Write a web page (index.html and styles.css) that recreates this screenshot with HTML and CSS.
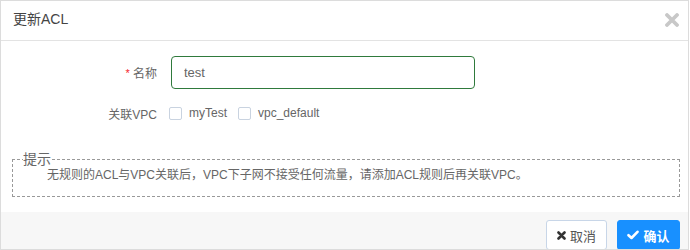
FILE: index.html
```html
<!DOCTYPE html>
<html lang="zh-CN">
<head>
<meta charset="utf-8">
<title>更新ACL</title>
<link rel="stylesheet" href="styles.css">
</head>
<body>
<div class="dialog">
  <div class="header">
    <span class="title">更新ACL</span>
    <svg class="close" width="14" height="14" viewBox="0 0 14 14"><path d="M2 2 L12 12 M12 2 L2 12" stroke="#c8c8c8" stroke-width="3.8" stroke-linecap="round"/></svg>
  </div>
  <div class="content">
    <div class="row">
      <label class="label"><span class="req">*</span> 名称</label>
      <input class="input" type="text" value="test">
    </div>
    <div class="row row2">
      <span class="label">关联VPC</span>
      <span class="opts">
        <span class="opt"><span class="cb"></span>myTest</span>
        <span class="opt"><span class="cb"></span>vpc_default</span>
      </span>
    </div>
    <fieldset class="tip">
      <legend>提示</legend>
      <p class="tip-text">无规则的ACL与VPC关联后，VPC下子网不接受任何流量，请添加ACL规则后再关联VPC。</p>
    </fieldset>
  </div>
  <div class="footer">
    <button class="btn btn-cancel"><svg width="9" height="9" viewBox="0 0 9 9"><path d="M1.5 1.5 L7.5 7.5 M7.5 1.5 L1.5 7.5" stroke="#333" stroke-width="2.6" stroke-linecap="round"/></svg>取消</button>
    <button class="btn btn-ok"><svg width="12" height="10" viewBox="0 0 12 10"><path d="M1.5 5.2 L4.5 8 L10.5 1.8" fill="none" stroke="#fff" stroke-width="2.6" stroke-linecap="round" stroke-linejoin="round"/></svg>确认</button>
  </div>
</div>
</body>
</html>
```
FILE: styles.css
```css
html, body {
  margin: 0;
  padding: 0;
  background: #fff;
}
body {
  font-family: "Liberation Sans", "Noto Sans CJK SC", sans-serif;
  color: #666;
}
.dialog {
  width: 689px;
  height: 250px;
  box-sizing: border-box;
  border: 1px solid #dcdcdc;
  overflow: hidden;
  display: flex;
  flex-direction: column;
  background: #fff;
}
.header {
  height: 39px;
  border-bottom: 1px solid #e3e3e3;
  display: flex;
  align-items: center;
  justify-content: space-between;
  padding: 0 9px 0 12px;
  flex: none;
}
.title {
  font-size: 14px;
  color: #444;
  line-height: 16px;
  margin-top: -3px;
}
.close {
  display: block;
  margin-top: -1px;
}
.content {
  padding-top: 15px;
  flex: none;
}
.row {
  display: flex;
  align-items: center;
}
.label {
  width: 156px;
  text-align: right;
  font-size: 12px;
  color: #666;
  margin-right: 14px;
  flex: none;
}
.req {
  color: #f5222d;
  font-size: 11px;
  position: relative;
  top: -1px;
}
.input {
  width: 304px;
  height: 33px;
  box-sizing: border-box;
  border: 1px solid #2f7a3c;
  border-radius: 4px;
  padding: 0 12px;
  font-family: "Liberation Sans", "Noto Sans CJK SC", sans-serif;
  font-size: 13px;
  color: #666;
  outline: none;
}
.row2 {
  margin-top: 14px;
  height: 20px;
}
.opts {
  display: flex;
  align-items: center;
  gap: 11px;
  margin-left: -2px;
}
.opt {
  display: flex;
  align-items: center;
  font-size: 12px;
  color: #666;
}
.cb {
  width: 11px;
  height: 11px;
  border: 1px solid #c9d3e0;
  border-radius: 2px;
  background: #fff;
  margin-right: 7px;
}
.tip {
  margin: 28px 8px 0 11px;
  padding: 0 10px 13px 10px;
  border: 1px dashed #999;
}
.tip legend {
  padding: 0;
  font-size: 14px;
  line-height: 16px;
  color: #666;
}
.tip-text {
  margin: 0;
  padding-left: 24px;
  font-size: 12px;
  line-height: 16px;
  color: #666;
}
.footer {
  margin-top: 15px;
  flex: 1;
  background: #f7f7f7;
  display: flex;
  justify-content: flex-end;
  align-items: flex-start;
  gap: 10px;
  padding: 8px 8px 0 0;
}
.btn {
  height: 30px;
  box-sizing: border-box;
  border-radius: 3px;
  font-family: "Liberation Sans", "Noto Sans CJK SC", sans-serif;
  font-size: 13px;
  display: flex;
  align-items: center;
  gap: 4px;
  padding: 0;
  justify-content: center;
}
.btn-cancel {
  width: 61px;
  background: #fff;
  border: 1px solid #c8d6e8;
  color: #555;
}
.btn-ok {
  width: 63px;
  background: #1890ff;
  border: 1px solid #1890ff;
  color: #fff;
  font-weight: bold;
}
```
